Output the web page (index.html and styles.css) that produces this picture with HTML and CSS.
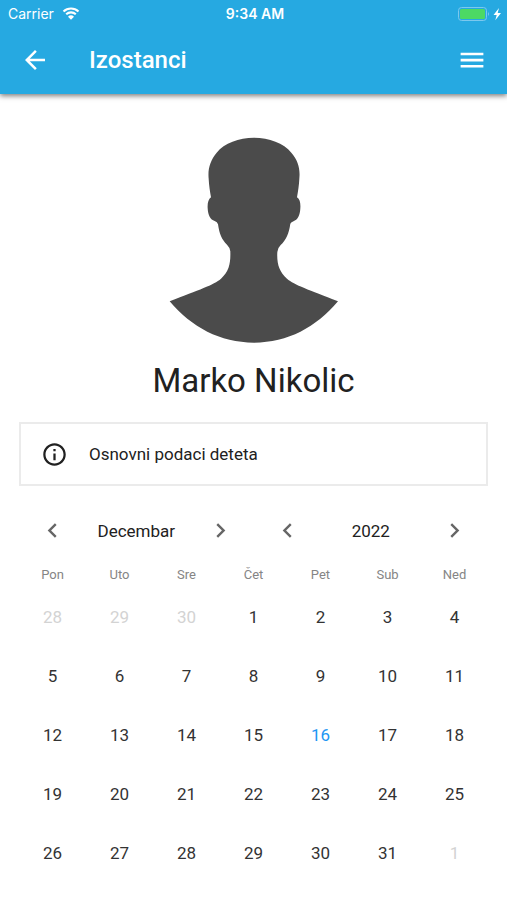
FILE: index.html
```html
<!DOCTYPE html>
<html lang="sr-Latn">
<head>
<meta charset="utf-8">
<meta name="viewport" content="width=device-width, initial-scale=1">
<title>Izostanci</title>
<link rel="stylesheet" href="styles.css">
</head>
<body>
<header class="top">
  <div class="status">
    <div class="carrier">
      <span>Carrier</span>
      <svg class="wifi" viewBox="0 0 18 13" aria-hidden="true">
        <path d="M1.500 4.500a10.800 10.800 0 0 1 15 0M4.200 7.300a7 7 0 0 1 9.600 0" fill="none" stroke="currentColor" stroke-width="2.100"/>
        <path d="M6 9.700a4.300 4.300 0 0 1 6 0L9 12.700z" fill="currentColor"/>
      </svg>
    </div>
    <time class="clock">9:34 AM</time>
    <svg class="battery" viewBox="0 0 44 14" aria-hidden="true">
      <rect x=".5" y=".5" width="28" height="13" rx="3" fill="none" stroke="#7cc8ee"/>
      <rect x="2" y="2" width="25" height="10" rx="1.500" fill="#4cd964"/>
      <path d="M30 5q2 2 0 4z" fill="#7cc8ee"/>
      <path d="M41 1L35.500 8h3.200L37.300 13.200 43 6h-3.300z" fill="#fff"/>
    </svg>
  </div>
  <div class="bar">
    <button class="icon-button" type="button" aria-label="Nazad">
      <svg viewBox="0 0 24 24"><path d="M20 11H7.830l5.590-5.590L12 4l-8 8 8 8 1.410-1.410L7.830 13H20z"/></svg>
    </button>
    <h1 class="title">Izostanci</h1>
    <button class="icon-button" type="button" aria-label="Meni">
      <svg viewBox="0 0 24 24"><path d="M2.900 6.100h18.200v2.100H2.900zM2.900 11h18.200v2.100H2.900zM2.900 15.900h18.200V18H2.900z"/></svg>
    </button>
  </div>
</header>
<main class="content">
  <section class="profile">
    <svg class="avatar" viewBox="55 52 516 618" aria-hidden="true">
      <path d="M313 54C358 54 402 70 425 99C445 122 452 147 449 177C448 197 445 216 442 233C451 239 453 251 452 266C451 286 444 301 433 304Q424 307 422 312C418 342 409 361 393 376Q383 386 383 397C381 431 388 456 412 477C434 496 478 510 565 545C499 623 415 669 313 669C211 669 126 623 60 545C148 510 192 496 214 477C238 456 243 431 242 397Q243 386 232 375C216 360 209 342 205 314Q203 307 195 304C182 301 175 287 174 266C173 251 176 239 184 233C181 216 178 197 177 177C174 147 182 122 201 99C224 70 268 54 313 54Z"/>
    </svg>
    <h2 class="name">Marko Nikolic</h2>
  </section>
  <button class="info" type="button">
    <svg viewBox="0 0 24 24" aria-hidden="true"><path d="M11 7h2v2h-2zm0 4h2v6h-2zm1-9C6.480 2 2 6.480 2 12s4.480 10 10 10 10-4.480 10-10S17.520 2 12 2zm0 18c-4.410 0-8-3.590-8-8s3.590-8 8-8 8 3.590 8 8-3.590 8-8 8z"/></svg>
    <span>Osnovni podaci deteta</span>
  </button>
  <div class="pickers">
    <div class="picker">
      <button type="button" aria-label="Prethodni mesec"><svg viewBox="0 0 24 24"><path d="M15.410 7.410L14 6l-6 6 6 6 1.410-1.410L10.830 12z"/></svg></button>
      <span>Decembar</span>
      <button type="button" aria-label="Naredni mesec"><svg viewBox="0 0 24 24"><path d="M10 6L8.590 7.410 13.170 12l-4.580 4.590L10 18l6-6z"/></svg></button>
    </div>
    <div class="picker">
      <button type="button" aria-label="Prethodna godina"><svg viewBox="0 0 24 24"><path d="M15.410 7.410L14 6l-6 6 6 6 1.410-1.410L10.830 12z"/></svg></button>
      <span>2022</span>
      <button type="button" aria-label="Naredna godina"><svg viewBox="0 0 24 24"><path d="M10 6L8.590 7.410 13.170 12l-4.580 4.590L10 18l6-6z"/></svg></button>
    </div>
  </div>
  <table class="calendar">
    <thead>
      <tr><th>Pon</th><th>Uto</th><th>Sre</th><th>Čet</th><th>Pet</th><th>Sub</th><th>Ned</th></tr>
    </thead>
    <tbody>
      <tr><td class="other">28</td><td class="other">29</td><td class="other">30</td><td>1</td><td>2</td><td>3</td><td>4</td></tr>
      <tr><td>5</td><td>6</td><td>7</td><td>8</td><td>9</td><td>10</td><td>11</td></tr>
      <tr><td>12</td><td>13</td><td>14</td><td>15</td><td class="today">16</td><td>17</td><td>18</td></tr>
      <tr><td>19</td><td>20</td><td>21</td><td>22</td><td>23</td><td>24</td><td>25</td></tr>
      <tr><td>26</td><td>27</td><td>28</td><td>29</td><td>30</td><td>31</td><td class="other">1</td></tr>
    </tbody>
  </table>
</main>
</body>
</html>
```
FILE: styles.css
```css
* {
  box-sizing: border-box;
}

body {
  margin: 0;
  background: #fff;
  color: #212121;
  font-family: Roboto, "Liberation Sans", sans-serif;
  font-size: 17px;
}

button {
  margin: 0;
  padding: 0;
  border: 0;
  background: none;
  color: inherit;
  font: inherit;
}

svg {
  display: block;
  fill: currentColor;
}

.top {
  background: #26a9e1;
  color: #fff;
  box-shadow: 0 2px 5px rgba(0, 0, 0, 0.5);
}

.status {
  display: grid;
  grid-template-columns: 1fr auto 1fr;
  align-items: center;
  height: 27px;
  padding: 0 5px 0 8px;
  font-family: Inter, sans-serif;
  font-size: 14px;
}

.carrier {
  display: flex;
  align-items: center;
  gap: 8px;
}

.wifi {
  width: 18px;
  height: 13px;
}

.clock {
  font-weight: 600;
}

.battery {
  justify-self: end;
  width: 44px;
  height: 14px;
}

.bar {
  display: flex;
  align-items: center;
  height: 67px;
  padding: 0 20px 1px;
}

.icon-button svg {
  width: 30px;
  height: 30px;
}

.title {
  flex: 1;
  margin: 0;
  padding-left: 39px;
  font-size: 24px;
  font-weight: 500;
}

.content {
  padding: 43px 19px 0;
}

.profile {
  display: flex;
  flex-direction: column;
  align-items: center;
}

.avatar {
  width: 172px;
  height: 206px;
  fill: #4b4b4b;
}

.name {
  margin: 18px 0 21px;
  font-size: 33px;
  font-weight: 400;
  line-height: 40px;
}

.info {
  display: flex;
  align-items: center;
  gap: 21px;
  width: 100%;
  height: 64px;
  padding: 0 20px;
  border: 2px solid #ebebeb;
}

.info svg {
  width: 27px;
  height: 27px;
}

.pickers {
  display: grid;
  grid-template-columns: 1fr 1fr;
  margin-top: 24px;
}

.picker {
  display: grid;
  grid-template-columns: 2fr 3fr 2fr;
  align-items: center;
  height: 41px;
  text-align: center;
}

.picker svg {
  width: 29px;
  height: 29px;
  margin: 0 auto;
  fill: #666;
}

.calendar {
  width: 100%;
  table-layout: fixed;
  border-collapse: collapse;
  text-align: center;
}

.calendar th {
  height: 41px;
  padding: 5px 0 0;
  color: #858585;
  font-size: 13px;
  font-weight: 400;
}

.calendar td {
  height: 59px;
  padding: 0 0 10px;
  color: #333;
}

.calendar .other {
  color: #d3d3d3;
}

.calendar .today {
  color: #2196f3;
}
```
